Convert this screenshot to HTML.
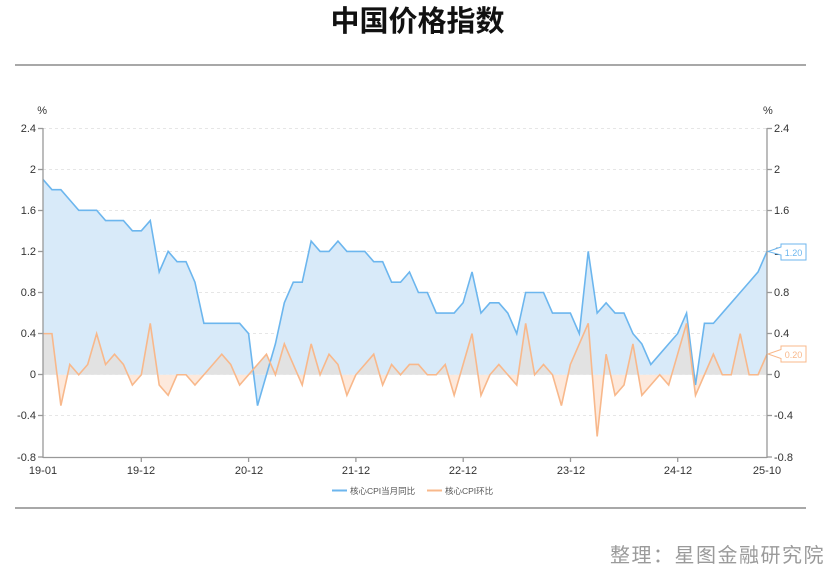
<!DOCTYPE html>
<html><head><meta charset="utf-8">
<style>
body{margin:0;width:835px;height:575px;background:#fff;font-family:"Liberation Sans","Noto Sans CJK SC",sans-serif;position:relative;overflow:hidden}
.t{position:absolute;left:0;width:835px;top:0;text-align:center;font-size:29px;font-weight:bold;color:#111;line-height:38px;font-family:"Noto Sans CJK SC",sans-serif}
.hr{position:absolute;left:15px;width:791px;height:2px;background:#a8a8a8}
.src{position:absolute;right:10px;top:539px;font-size:20px;color:#9a9a9a;font-family:"Noto Sans CJK SC",sans-serif;letter-spacing:1.5px}
svg{position:absolute;left:0;top:0}
svg text{font-family:"Liberation Sans","Noto Sans CJK SC",sans-serif}
</style></head><body>
<div class="t">中国价格指数</div>
<div class="hr" style="top:64px"></div>
<div class="hr" style="top:507px"></div>
<div class="src">整理：星图金融研究院</div>
<svg width="835" height="575" id="s">
<defs>
<clipPath id="ab"><rect x="0" y="0" width="835" height="374.75"/></clipPath>
<clipPath id="be"><rect x="0" y="374.75" width="835" height="200"/></clipPath>
</defs>
<g stroke="#e6e6e6" stroke-dasharray="3,3" stroke-width="1">
<line x1="43" x2="767" y1="128.5" y2="128.5"/><line x1="43" x2="767" y1="169.5" y2="169.5"/><line x1="43" x2="767" y1="210.5" y2="210.5"/><line x1="43" x2="767" y1="251.5" y2="251.5"/><line x1="43" x2="767" y1="292.5" y2="292.5"/><line x1="43" x2="767" y1="333.5" y2="333.5"/><line x1="43" x2="767" y1="374.5" y2="374.5"/><line x1="43" x2="767" y1="415.5" y2="415.5"/>
</g>
<path id="bf" fill="#d8eaf9"/>
<path id="of1" fill="#e2e2e2" clip-path="url(#ab)"/>
<path id="of2" fill="#fde9dc" clip-path="url(#be)"/>
<path id="bl" fill="none" stroke="#6cb6ee" stroke-width="1.6"/>
<path id="ol" fill="none" stroke="#f8b88b" stroke-width="1.6"/>
<g stroke="#999" stroke-width="1.3">
<line x1="43" x2="43" y1="128" y2="458"/><line x1="767" x2="767" y1="128" y2="458"/>
<line x1="43" x2="767" y1="457.5" y2="457.5"/>
<line x1="38" x2="43" y1="128.5" y2="128.5"/><line x1="38" x2="43" y1="169.5" y2="169.5"/><line x1="38" x2="43" y1="210.5" y2="210.5"/><line x1="38" x2="43" y1="251.5" y2="251.5"/><line x1="38" x2="43" y1="292.5" y2="292.5"/><line x1="38" x2="43" y1="333.5" y2="333.5"/><line x1="38" x2="43" y1="374.5" y2="374.5"/><line x1="38" x2="43" y1="415.5" y2="415.5"/><line x1="38" x2="43" y1="457" y2="457"/>
<line x1="767" x2="772" y1="128.5" y2="128.5"/><line x1="767" x2="772" y1="169.5" y2="169.5"/><line x1="767" x2="772" y1="210.5" y2="210.5"/><line x1="767" x2="772" y1="251.5" y2="251.5"/><line x1="767" x2="772" y1="292.5" y2="292.5"/><line x1="767" x2="772" y1="333.5" y2="333.5"/><line x1="767" x2="772" y1="374.5" y2="374.5"/><line x1="767" x2="772" y1="415.5" y2="415.5"/><line x1="767" x2="772" y1="457" y2="457"/>
<line x1="141.3" x2="141.3" y1="457" y2="462"/><line x1="248.6" x2="248.6" y1="457" y2="462"/><line x1="355.9" x2="355.9" y1="457" y2="462"/><line x1="463.2" x2="463.2" y1="457" y2="462"/><line x1="570.5" x2="570.5" y1="457" y2="462"/><line x1="677.7" x2="677.7" y1="457" y2="462"/>
</g>
<g font-size="11" fill="#333" text-anchor="end">
<text x="36" y="132">2.4</text><text x="36" y="173">2</text><text x="36" y="214">1.6</text><text x="36" y="255">1.2</text><text x="36" y="296">0.8</text><text x="36" y="337">0.4</text><text x="36" y="378">0</text><text x="36" y="419">-0.4</text><text x="36" y="461">-0.8</text>
<text x="47" y="114">%</text>
</g>
<g font-size="11" fill="#333">
<text x="774" y="132">2.4</text><text x="774" y="173">2</text><text x="774" y="214">1.6</text><text x="774" y="255">1.2</text><text x="774" y="296">0.8</text><text x="774" y="337">0.4</text><text x="774" y="378">0</text><text x="774" y="419">-0.4</text><text x="774" y="461">-0.8</text>
<text x="763" y="114">%</text>
</g>
<g font-size="11" fill="#333" text-anchor="middle">
<text x="43" y="474">19-01</text><text x="141" y="474">19-12</text><text x="249" y="474">20-12</text><text x="356" y="474">21-12</text><text x="463" y="474">22-12</text><text x="571" y="474">23-12</text><text x="678" y="474">24-12</text><text x="767" y="474">25-10</text>
</g>
<line x1="332" x2="347" y1="490.5" y2="490.5" stroke="#6cb6ee" stroke-width="2"/>
<text x="350" y="494" font-size="8.5" fill="#555">核心CPI当月同比</text>
<line x1="427" x2="442" y1="490.5" y2="490.5" stroke="#f8b88b" stroke-width="2"/>
<text x="445" y="494" font-size="8.5" fill="#555">核心CPI环比</text>
<path d="M768 251.5 L781 247 L781 244 L806 244 L806 260 L781 260 L781 255 Z" fill="#fff" stroke="#6cb6ee"/>
<text x="793.5" y="256" font-size="9" fill="#6cb6ee" text-anchor="middle">1.20</text>
<path d="M768 354 L781 349.5 L781 346 L806 346 L806 362 L781 362 L781 358.5 Z" fill="#fff" stroke="#f8b88b"/>
<text x="793.5" y="358" font-size="9" fill="#f8b88b" text-anchor="middle">0.20</text>
</svg>
<script>
var yoy=[1.9,1.8,1.8,1.7,1.6,1.6,1.6,1.5,1.5,1.5,1.4,1.4,1.5,1.0,1.2,1.1,1.1,0.9,0.5,0.5,0.5,0.5,0.5,0.4,-0.3,0.0,0.3,0.7,0.9,0.9,1.3,1.2,1.2,1.3,1.2,1.2,1.2,1.1,1.1,0.9,0.9,1.0,0.8,0.8,0.6,0.6,0.6,0.7,1.0,0.6,0.7,0.7,0.6,0.4,0.8,0.8,0.8,0.6,0.6,0.6,0.4,1.2,0.6,0.7,0.6,0.6,0.4,0.3,0.1,0.2,0.3,0.4,0.6,-0.1,0.5,0.5,0.6,0.7,0.8,0.9,1.0,1.2];
var mom=[0.4,0.4,-0.3,0.1,0,0.1,0.4,0.1,0.2,0.1,-0.1,0,0.5,-0.1,-0.2,0,0,-0.1,0,0.1,0.2,0.1,-0.1,0,0.1,0.2,0,0.3,0.1,-0.1,0.3,0,0.2,0.1,-0.2,0,0.1,0.2,-0.1,0.1,0,0.1,0.1,0,0,0.1,-0.2,0.1,0.4,-0.2,0,0.1,0,-0.1,0.5,0,0.1,0,-0.3,0.1,0.3,0.5,-0.6,0.2,-0.2,-0.1,0.3,-0.2,-0.1,0,-0.1,0.2,0.5,-0.2,0,0.2,0,0,0.4,0,0,0.2];
function X(i){return 43+i*724/81}function Y(v){return 374.75-v*102.8}
function line(a){return a.map(function(v,i){return(i?'L':'M')+X(i).toFixed(2)+' '+Y(v).toFixed(2)}).join(' ')}
function area(a){return line(a)+' L767 374.75 L43 374.75 Z'}
document.getElementById('bl').setAttribute('d',line(yoy));
document.getElementById('ol').setAttribute('d',line(mom));
document.getElementById('bf').setAttribute('d',area(yoy));
document.getElementById('of1').setAttribute('d',area(mom));
document.getElementById('of2').setAttribute('d',area(mom));
</script>
</body></html>
